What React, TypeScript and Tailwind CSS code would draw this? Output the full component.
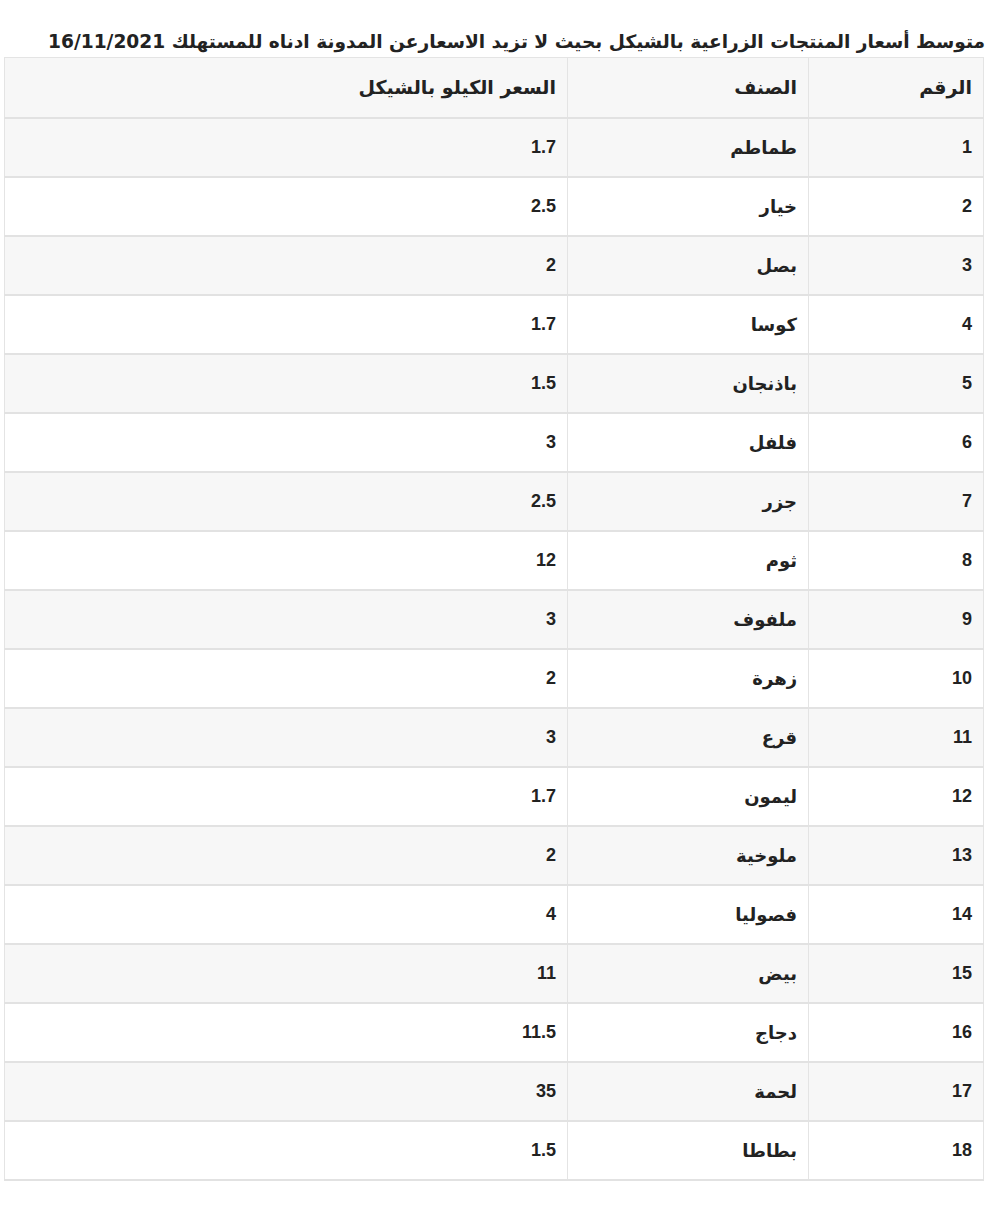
const rows: [number, string, string][] = [
  [1, "طماطم", "1.7"],
  [2, "خيار", "2.5"],
  [3, "بصل", "2"],
  [4, "كوسا", "1.7"],
  [5, "باذنجان", "1.5"],
  [6, "فلفل", "3"],
  [7, "جزر", "2.5"],
  [8, "ثوم", "12"],
  [9, "ملفوف", "3"],
  [10, "زهرة", "2"],
  [11, "قرع", "3"],
  [12, "ليمون", "1.7"],
  [13, "ملوخية", "2"],
  [14, "فصوليا", "4"],
  [15, "بيض", "11"],
  [16, "دجاج", "11.5"],
  [17, "لحمة", "35"],
  [18, "بطاطا", "1.5"],
];

const cell = "border-x border-[#e4e4e4] px-[11px] text-right align-middle";
const num = { fontFamily: '"Liberation Sans", "DejaVu Sans", sans-serif' };

export default function App() {
  return (
    <div className="min-h-[1211px] bg-white text-[#222]" style={{ fontFamily: '"DejaVu Sans", "Liberation Sans", sans-serif' }} dir="rtl">
      <div className="pl-[16px] pr-[15px]">
        <h1 className="pt-[30px] h-[57px] text-right text-[18.6px] font-bold leading-[24px] tracking-[-0.5px] whitespace-nowrap">
          متوسط أسعار المنتجات الزراعية بالشيكل بحيث لا تزيد الاسعارعن المدونة ادناه للمستهلك 16/11/2021
        </h1>
      </div>
      <div className="pl-[4px] pr-[16px]">
        <table className="w-[980px] border-collapse border-t border-[#e4e4e4] font-bold">
          <thead>
            <tr className="h-[60px] bg-[#f7f7f7] border-b-2 border-[#e2e2e2] text-[19px]">
              <th className={`${cell} w-[175px] font-bold`}>الرقم</th>
              <th className={`${cell} w-[241px] font-bold`}>الصنف</th>
              <th className={`${cell} font-bold`}>السعر الكيلو بالشيكل</th>
            </tr>
          </thead>
          <tbody>
            {rows.map(([n, name, price]) => (
              <tr
                key={n}
                className={`h-[59px] border-b-2 border-[#e2e2e2] ${n % 2 === 1 ? "bg-[#f7f7f7]" : "bg-white"}`}
              >
                <td className={`${cell} text-[18px]`} style={num}>{n}</td>
                <td className={`${cell} text-[18px]`}>{name}</td>
                <td className={`${cell} text-[18px]`} style={num}>{price}</td>
              </tr>
            ))}
          </tbody>
        </table>
      </div>
    </div>
  );
}
